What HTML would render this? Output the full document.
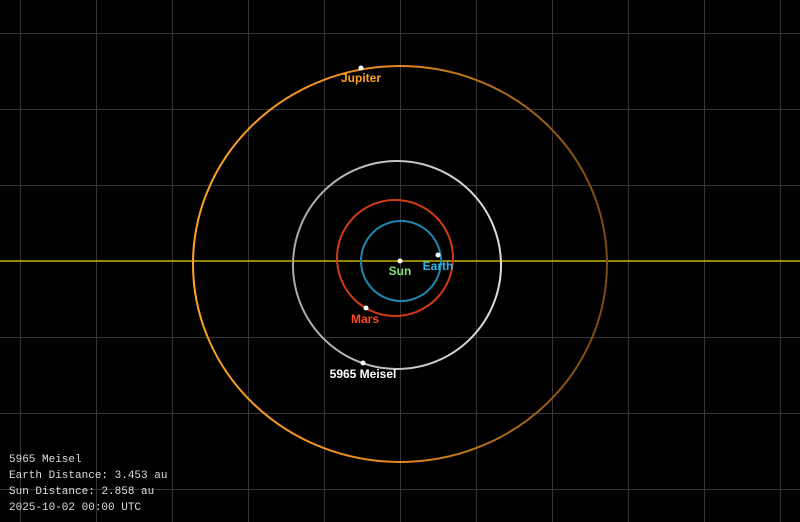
<!DOCTYPE html>
<html><head><style>
body{margin:0;background:#000;width:800px;height:522px;overflow:hidden}
svg{display:block}
.l{font-family:"Liberation Sans",sans-serif;font-weight:bold;font-size:12px;text-anchor:middle}
.m{font-family:"Liberation Mono",monospace;font-size:11px;fill:#ddd}
</style></head><body>
<svg width="800" height="522" viewBox="0 0 800 522">
<defs>
<linearGradient id="jg" x1="193" y1="0" x2="607" y2="0" gradientUnits="userSpaceOnUse">
<stop offset="0" stop-color="#ffa326"/><stop offset="0.5" stop-color="#e08a1c"/><stop offset="1" stop-color="#7a4a10"/></linearGradient>
<linearGradient id="mg" x1="293" y1="0" x2="501" y2="0" gradientUnits="userSpaceOnUse">
<stop offset="0" stop-color="#aaa"/><stop offset="1" stop-color="#ddd"/></linearGradient>
</defs>
<g stroke="#363636" stroke-width="1">
<line x1="20.5" y1="0" x2="20.5" y2="522"/><line x1="96.5" y1="0" x2="96.5" y2="522"/>
<line x1="172.5" y1="0" x2="172.5" y2="522"/><line x1="248.5" y1="0" x2="248.5" y2="522"/>
<line x1="324.5" y1="0" x2="324.5" y2="522"/><line x1="400.5" y1="0" x2="400.5" y2="522"/>
<line x1="476.5" y1="0" x2="476.5" y2="522"/><line x1="552.5" y1="0" x2="552.5" y2="522"/>
<line x1="628.5" y1="0" x2="628.5" y2="522"/><line x1="704.5" y1="0" x2="704.5" y2="522"/>
<line x1="780.5" y1="0" x2="780.5" y2="522"/>
<line x1="0" y1="33.5" x2="800" y2="33.5"/><line x1="0" y1="109.5" x2="800" y2="109.5"/>
<line x1="0" y1="185.5" x2="800" y2="185.5"/><line x1="0" y1="337.5" x2="800" y2="337.5"/>
<line x1="0" y1="413.5" x2="800" y2="413.5"/><line x1="0" y1="489.5" x2="800" y2="489.5"/>
</g>
<line x1="0" y1="261" x2="800" y2="261" stroke="#c9b200" stroke-width="1.5"/>
<ellipse cx="400" cy="264" rx="207" ry="198" fill="none" stroke="url(#jg)" stroke-width="2"/>
<ellipse cx="397" cy="265" rx="104" ry="104" fill="none" stroke="url(#mg)" stroke-width="2"/>
<circle cx="395" cy="258" r="58" fill="none" stroke="#d23a14" stroke-width="2"/>
<circle cx="401" cy="261" r="40" fill="none" stroke="#1f88b0" stroke-width="2"/>
<g fill="#fff">
<circle cx="400" cy="261" r="2.5"/><circle cx="438" cy="255" r="2.5"/>
<circle cx="366" cy="308" r="2.5"/><circle cx="363" cy="363" r="2.5"/><circle cx="361" cy="68" r="2.5"/>
</g>
<text class="l" x="400" y="275" fill="#8ee07a">Sun</text>
<text class="l" x="438" y="270" fill="#2ab8ea">Earth</text>
<text class="l" x="365" y="323" fill="#ff4a20">Mars</text>
<text class="l" x="363" y="378" fill="#fff">5965 Meisel</text>
<text class="l" x="361" y="82" fill="#ffa326">Jupiter</text>
<text class="m" x="9" y="462">5965 Meisel</text>
<text class="m" x="9" y="478">Earth Distance: 3.453 au</text>
<text class="m" x="9" y="494">Sun Distance: 2.858 au</text>
<text class="m" x="9" y="510">2025-10-02 00:00 UTC</text>
</svg>
</body></html>
